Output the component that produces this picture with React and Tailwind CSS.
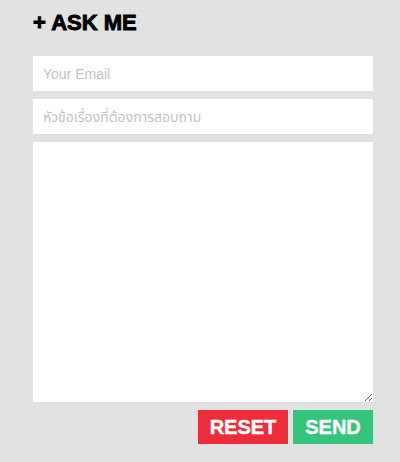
import React from 'react'

export default function App() {
  return (
    <div
      className="w-[400px] h-[462px] bg-[#e1e1e1] font-['Liberation_Sans',Arial,sans-serif]"
      style={{
        backgroundImage:
          'linear-gradient(rgba(255,255,255,0.1) 1px, transparent 1px), linear-gradient(90deg, rgba(255,255,255,0.1) 1px, transparent 1px)',
        backgroundSize: '8px 8px',
      }}
    >
      <div className="pl-[33px] pr-[27px] pt-[11px]">
        <h2 className="text-[22px] leading-[24px] font-bold text-black tracking-[0px] [-webkit-text-stroke:0.9px_black]">
          + ASK ME
        </h2>
        <form className="mt-[21px] flex flex-col" onSubmit={(e) => e.preventDefault()}>
          <input
            type="email"
            placeholder="Your Email"
            className="h-[35px] w-full bg-white px-[10px] text-[14px] text-gray-700 placeholder:text-[#c4c4c4] outline-none font-['Liberation_Sans',Arial,sans-serif]"
          />
          <input
            type="text"
            placeholder="หัวข้อเรื่องที่ต้องการสอบถาม"
            className="mt-[8px] h-[35px] w-full bg-white px-[10px] text-[14px] text-gray-700 placeholder:text-[#c4c4c4] outline-none font-['Liberation_Sans','Noto_Sans_Thai','DejaVu_Sans',sans-serif]"
          />
          <textarea className="mt-[8px] h-[260px] w-full bg-white p-[10px] text-[14px] outline-none block" />
          <div className="mt-[8px] flex justify-end gap-[5px]">
            <button type="reset" className="w-[90px] h-[34px] bg-[#ee2d3b] text-white font-bold text-[20px] leading-none [-webkit-text-stroke:0.4px_white]">
              RESET
            </button>
            <button type="submit" className="w-[80px] h-[34px] bg-[#35c47b] text-white font-bold text-[20px] leading-none [-webkit-text-stroke:0.4px_white]">
              SEND
            </button>
          </div>
        </form>
      </div>
    </div>
  )
}
